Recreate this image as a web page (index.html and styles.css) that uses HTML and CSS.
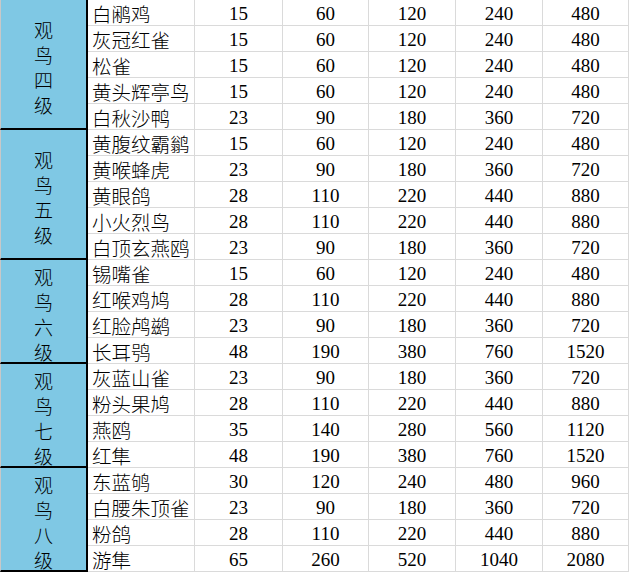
FILE: index.html
```html
<!DOCTYPE html>
<html lang="zh">
<head>
<meta charset="utf-8">
<link rel="stylesheet" href="styles.css">
</head>
<body>
<div class="sheet">
  <div class="grp g5"><span>观</span><span>鸟</span><span>四</span><span>级</span></div>
  <div class="nm">白鹇鸡</div><div class="n">15</div><div class="n">60</div><div class="n">120</div><div class="n">240</div><div class="n">480</div>
  <div class="nm">灰冠红雀</div><div class="n">15</div><div class="n">60</div><div class="n">120</div><div class="n">240</div><div class="n">480</div>
  <div class="nm">松雀</div><div class="n">15</div><div class="n">60</div><div class="n">120</div><div class="n">240</div><div class="n">480</div>
  <div class="nm">黄头辉亭鸟</div><div class="n">15</div><div class="n">60</div><div class="n">120</div><div class="n">240</div><div class="n">480</div>
  <div class="nm">白秋沙鸭</div><div class="n">23</div><div class="n">90</div><div class="n">180</div><div class="n">360</div><div class="n">720</div>

  <div class="grp g5"><span>观</span><span>鸟</span><span>五</span><span>级</span></div>
  <div class="nm">黄腹纹霸鹟</div><div class="n">15</div><div class="n">60</div><div class="n">120</div><div class="n">240</div><div class="n">480</div>
  <div class="nm">黄喉蜂虎</div><div class="n">23</div><div class="n">90</div><div class="n">180</div><div class="n">360</div><div class="n">720</div>
  <div class="nm">黄眼鸽</div><div class="n">28</div><div class="n">110</div><div class="n">220</div><div class="n">440</div><div class="n">880</div>
  <div class="nm">小火烈鸟</div><div class="n">28</div><div class="n">110</div><div class="n">220</div><div class="n">440</div><div class="n">880</div>
  <div class="nm">白顶玄燕鸥</div><div class="n">23</div><div class="n">90</div><div class="n">180</div><div class="n">360</div><div class="n">720</div>

  <div class="grp g4"><span>观</span><span>鸟</span><span>六</span><span>级</span></div>
  <div class="nm">锡嘴雀</div><div class="n">15</div><div class="n">60</div><div class="n">120</div><div class="n">240</div><div class="n">480</div>
  <div class="nm">红喉鸡鸠</div><div class="n">28</div><div class="n">110</div><div class="n">220</div><div class="n">440</div><div class="n">880</div>
  <div class="nm">红脸鸬鹚</div><div class="n">23</div><div class="n">90</div><div class="n">180</div><div class="n">360</div><div class="n">720</div>
  <div class="nm">长耳鸮</div><div class="n">48</div><div class="n">190</div><div class="n">380</div><div class="n">760</div><div class="n">1520</div>

  <div class="grp g4"><span>观</span><span>鸟</span><span>七</span><span>级</span></div>
  <div class="nm">灰蓝山雀</div><div class="n">23</div><div class="n">90</div><div class="n">180</div><div class="n">360</div><div class="n">720</div>
  <div class="nm">粉头果鸠</div><div class="n">28</div><div class="n">110</div><div class="n">220</div><div class="n">440</div><div class="n">880</div>
  <div class="nm">燕鸥</div><div class="n">35</div><div class="n">140</div><div class="n">280</div><div class="n">560</div><div class="n">1120</div>
  <div class="nm">红隼</div><div class="n">48</div><div class="n">190</div><div class="n">380</div><div class="n">760</div><div class="n">1520</div>

  <div class="grp g4"><span>观</span><span>鸟</span><span>八</span><span>级</span></div>
  <div class="nm">东蓝鸲</div><div class="n">30</div><div class="n">120</div><div class="n">240</div><div class="n">480</div><div class="n">960</div>
  <div class="nm">白腰朱顶雀</div><div class="n">23</div><div class="n">90</div><div class="n">180</div><div class="n">360</div><div class="n">720</div>
  <div class="nm">粉鸽</div><div class="n">28</div><div class="n">110</div><div class="n">220</div><div class="n">440</div><div class="n">880</div>
  <div class="nm">游隼</div><div class="n">65</div><div class="n">260</div><div class="n">520</div><div class="n">1040</div><div class="n">2080</div>
</div>
</body>
</html>
```

FILE: styles.css
```css
html, body {
  margin: 0;
  padding: 0;
  background: #ffffff;
}

.sheet {
  display: grid;
  grid-template-columns: 88px 107px 88px 86px 87px 87px 86px;
  grid-auto-rows: 26px;
  width: 629px;
  font-family: "Liberation Serif", "Noto Sans CJK SC", serif;
  color: #000;
}

.sheet > div {
  box-sizing: border-box;
  border-right: 1px solid #dadada;
  border-bottom: 1px solid #dadada;
  font-size: 19px;
  line-height: 22px;
  padding-top: 3px;
  white-space: nowrap;
}

.sheet > .grp {
  grid-column: 1;
  background: #7fc8e4;
  border-left: 1px solid #c8c8c8;
  border-right: 2px solid #000;
  border-bottom: 2px solid #000;
  display: flex;
  flex-direction: column;
  align-items: center;
  justify-content: center;
  padding-top: 5px;
  font-family: "Noto Sans CJK SC", sans-serif;
  font-size: 19px;
  line-height: 25px;
  font-weight: 300;
}

.grp span {
  display: block;
  height: 25px;
}

.g5 { grid-row: span 5; }
.g4 { grid-row: span 4; }

.sheet > .nm {
  font-family: "Noto Sans CJK SC", sans-serif;
  font-size: 19.5px;
  font-weight: 300;
  line-height: 23px;
  padding-top: 2px;
  padding-left: 4px;
}

.n {
  text-align: center;
}
```
